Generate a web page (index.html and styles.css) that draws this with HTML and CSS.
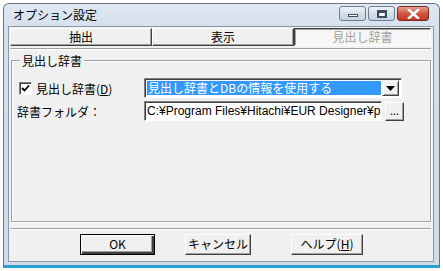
FILE: index.html
```html
<!DOCTYPE html>
<html lang="ja">
<head>
    <meta charset="UTF-8">
    <title>オプション設定</title>
    <link rel="stylesheet" href="styles.css">
</head>
<body>
    <div class="window">
        <div class="titlebar">
            <span class="title">オプション設定</span>
            <div class="controls">
                <div class="ctl"><span class="ico-min"></span></div>
                <div class="ctl"><span class="ico-max"></span></div>
                <div class="ctl close">
                    <svg width="13" height="10" viewBox="0 0 13 10">
                        <path d="M2 1 L11 9 M11 1 L2 9" stroke="#fff" stroke-width="2.6" stroke-linecap="square"/>
                    </svg>
                </div>
            </div>
        </div>
        <div class="client">
            <div class="tabs">
                <div class="tab">抽出</div>
                <div class="tab">表示</div>
                <div class="tab active">見出し辞書</div>
            </div>
            <div class="sep"></div>
            <fieldset class="group">
                <legend>見出し辞書</legend>
                <div class="row">
                    <label class="check"><span class="box">
                        <svg width="9" height="9" viewBox="0 0 9 9"><path d="M1 4 L3.5 6.5 L8 1.5" fill="none" stroke="#000" stroke-width="1.8"/></svg>
                    </span>見出し辞書(<u>D</u>)</label>
                    <div class="combo">
                        <div class="combo-text"><span class="sel">見出し辞書とDBの情報を使用する</span></div>
                        <div class="combo-btn">
                            <svg width="9" height="5" viewBox="0 0 9 5"><path d="M0 0 L9 0 L4.5 5 Z" fill="#000"/></svg>
                        </div>
                    </div>
                </div>
                <div class="row">
                    <span class="lbl">辞書フォルダ：</span>
                    <div class="field">C:¥Program Files¥Hitachi¥EUR Designer¥p</div>
                    <div class="btn small">...</div>
                </div>
            </fieldset>
            <div class="sep bottom"></div>
            <div class="buttons">
                <div class="btn ok">OK</div>
                <div class="btn">キャンセル</div>
                <div class="btn help">ヘルプ(<u>H</u>)</div>
            </div>
        </div>
    </div>
</body>
</html>
```

FILE: styles.css
```css
*{
    margin: 0;
    padding: 0;
    box-sizing: border-box;
}
body {
    background: #fff;
    font-family: "Noto Sans CJK JP", "Noto Sans", sans-serif;
    font-size: 12px;
    color: #000;
}
.window{
    margin: 3px 0 0 3px;
    width: 437px;
    height: 265px;
    border: 1px solid #6b7480;
    border-bottom: 3px solid #2a9fd0;
    border-radius: 6px 6px 0 0;
    background: linear-gradient(#dfe8f2, #d3dfec 30px, #cfdbe9);
    display: flex;
    flex-direction: column;
    padding: 0 5px 3px 4px;
}
.titlebar{
    height: 22px;
    display: flex;
    justify-content: space-between;
    align-items: flex-start;
}
.title{
    padding: 3px 0 0 5px;
    font-size: 12px;
    line-height: 16px;
}
.controls{
    display: flex;
    gap: 2px;
    padding-top: 2px;
    margin-right: 5px;
}
.ctl{
    width: 27px;
    height: 15px;
    border: 1px solid #6f7d8e;
    border-radius: 3px;
    background: linear-gradient(#eef3f8, #d5dfea 50%, #c4d2e2);
    display: flex;
    justify-content: center;
    align-items: center;
}
.ctl.close{
    width: 32px;
    border-color: #7a2a20;
    background: linear-gradient(#e8a193, #d0563e 50%, #c03a22);
}
.ico-min{
    width: 10px;
    height: 3px;
    margin-top: 4px;
    background: #fff;
    border: 1px solid #3c4d66;
}
.ico-max{
    width: 10px;
    height: 8px;
    border: 1px solid #3c4d66;
    border-top-width: 2px;
    background: #fff;
    box-shadow: inset 0 0 0 1px #3c4d66;
    background-clip: content-box;
    padding: 1px 2px;
}
.client{
    flex: 1;
    background: #f0f0f0;
    border: 1px solid #8c97a5;
    display: flex;
    flex-direction: column;
    padding: 1px 2px 0 1px;
}
.tabs{
    display: grid;
    grid-template-columns: 142px 142px 1fr;
    height: 18px;
}
.tab{
    text-align: center;
    line-height: 16px;
    border: 1px solid;
    border-color: #fff #404040 #404040 #fff;
    box-shadow: inset -1px -1px #a0a0a0;
}
.tab.active{
    color: #a0a0a0;
    border-color: #404040 #fff #fff #404040;
    box-shadow: inset 1px 1px #a0a0a0;
    background: #f6f6f6;
}
.sep{
    height: 2px;
    margin-top: 2px;
    border-top: 1px solid #a0a0a0;
    border-bottom: 1px solid #fff;
}
.group{
    margin: 4px 0 0 1px;
    height: 168px;
    border: 1px solid #a0a0a0;
    box-shadow: 1px 1px #fff, inset 1px 1px #fff;
    padding: 11px 9px 0 4px;
}
.group legend{
    margin-left: 4px;
    padding: 0 2px;
    line-height: 13px;
}
.row{
    display: flex;
    align-items: center;
    height: 20px;
    margin-bottom: 3px;
}
.check{
    width: 128px;
    display: flex;
    align-items: center;
    padding-left: 3px;
}
.box{
    width: 13px;
    height: 13px;
    border: 1px solid;
    border-color: #808080 #fff #fff #808080;
    box-shadow: inset 1px 1px #404040;
    background: #fff;
    margin-right: 4px;
    display: flex;
    justify-content: center;
    align-items: center;
}
.lbl{
    width: 128px;
    padding-left: 1px;
}
.combo{
    width: 258px;
    height: 20px;
    display: flex;
    border: 1px solid;
    border-color: #808080 #fff #fff #808080;
    box-shadow: inset 1px 1px #404040;
    background: #fff;
    padding: 2px;
}
.combo-text{
    flex: 1;
    display: flex;
}
.sel{
    flex: 1;
    background: #3399ff;
    color: #fff;
    line-height: 14px;
    padding-left: 1px;
}
.combo-btn{
    width: 17px;
    height: 16px;
    margin: -1px 0 0 1px;
    border: 1px solid;
    border-color: #f0f0f0 #404040 #404040 #f0f0f0;
    box-shadow: inset 1px 1px #fff, inset -1px -1px #a0a0a0;
    background: #f0f0f0;
    display: flex;
    justify-content: center;
    align-items: center;
}
.field{
    width: 238px;
    height: 20px;
    border: 1px solid;
    border-color: #808080 #fff #fff #808080;
    box-shadow: inset 1px 1px #404040;
    background: #fff;
    padding: 2px 0 0 2px;
    line-height: 15px;
    white-space: nowrap;
    overflow: hidden;
    font-family: "Liberation Sans", "Noto Sans CJK JP", sans-serif;
    font-size: 12px;
}
.btn{
    border: 1px solid;
    border-color: #fff #404040 #404040 #fff;
    box-shadow: inset -1px -1px #a0a0a0;
    background: #f0f0f0;
    text-align: center;
    width: 66px;
    height: 21px;
    line-height: 18px;
}
.btn.small{
    width: 19px;
    height: 19px;
    margin-left: 3px;
    line-height: 14px;
    font-size: 11px;
}
.sep.bottom{
    margin-top: 6px;
}
.buttons{
    display: flex;
    gap: 30px;
    padding: 4px 0 0 70px;
}
.btn.ok{
    width: 75px;
    border-color: #000;
    box-shadow: inset 1px 1px #fff, inset -2px -2px #404040, inset -3px -3px #a0a0a0;
}
.btn.help{
    width: 72px;
    margin-left: 10px;
}
```
